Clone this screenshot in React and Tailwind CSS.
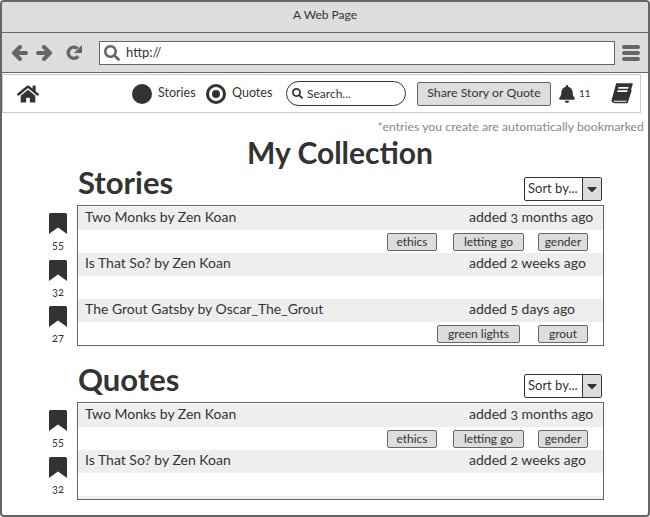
import React from 'react';
import { FaHome, FaBell, FaSearch, FaCaretDown } from 'react-icons/fa';

const stories = [
  { title: 'Two Monks by Zen Koan', added: 'added 3 months ago', tags: ['ethics', 'letting go', 'gender'], count: 55 },
  { title: 'Is That So? by Zen Koan', added: 'added 2 weeks ago', tags: [], count: 32 },
  { title: 'The Grout Gatsby by Oscar_The_Grout', added: 'added 5 days ago', tags: ['green lights', 'grout'], count: 27 },
];

const quotes = stories.slice(0, 2);

const tagWidths = {
  ethics: 'w-[50px] mr-4',
  'letting go': 'w-[71px] mr-[14px]',
  gender: 'w-[50px]',
  'green lights': 'w-[83px] mr-[18px]',
  grout: 'w-[50px]',
};

function BookmarkIcon() {
  return (
    <svg width="18" height="21" viewBox="0 0 18 21" className="block">
      <path d="M0 1.5Q0 0 1.5 0H16.5Q18 0 18 1.5V21L9 14.5L0 21Z" fill="#333" />
    </svg>
  );
}

function BackIcon({ flip }) {
  return (
    <svg width="17" height="16" viewBox="0 0 17 16" className={`block ${flip ? '-scale-x-100' : ''}`}>
      <path d="M9 2L3 8L9 14M3 8H15" fill="none" stroke="#666" strokeWidth="4" strokeLinecap="round" strokeLinejoin="round" />
    </svg>
  );
}

function ReloadIcon() {
  return (
    <svg width="16" height="16" viewBox="0 0 16 16" className="block">
      <path d="M12.2 11.2A5.6 5.6 0 1 1 11.6 3.6" fill="none" stroke="#666" strokeWidth="3.4" />
      <path d="M16 0V8H8Z" fill="#666" />
    </svg>
  );
}

function MenuIcon() {
  return (
    <svg width="18" height="16" viewBox="0 0 18 16" className="block">
      <rect x="0" y="0" width="18" height="4" rx="2" fill="#666" />
      <rect x="0" y="6" width="18" height="4" rx="2" fill="#666" />
      <rect x="0" y="12" width="18" height="4" rx="2" fill="#666" />
    </svg>
  );
}

function BookIcon() {
  return (
    <svg width="23" height="21" viewBox="0 0 23 21" className="block">
      <path d="M6 1H22L17 17H4Q2 17 2.5 18.2Q3 19.5 5 19.5H17L21 7" fill="none" stroke="#333" strokeWidth="1.6" strokeLinejoin="round" />
      <path d="M6 1H22L17 17H4Q1.8 17 1.3 18L6 1Z" fill="#333" />
      <path d="M8.6 4H18.6L18.1 5.8H8.1ZM7.7 7.2H17.7L17.2 9H7.2Z" fill="#fff" />
    </svg>
  );
}

function SortBy() {
  return (
    <div className="flex h-6 w-[78px] border border-[#333] rounded-[2px] text-[13px] text-[#333] bg-white">
      <div className="flex-1 pl-[3px] leading-[20px]">Sort by...</div>
      <div className="w-[19px] bg-[#ddd] border-l border-[#333] flex items-center justify-center">
        <FaCaretDown className="text-[16px] text-[#333]" />
      </div>
    </div>
  );
}

function Section({ title, items, extraRow, titleClass }) {
  return (
    <section>
      <div className={`flex items-end justify-between pl-[76px] pr-[46px] ${titleClass}`}>
        <h2 className="text-[31px] leading-[36px] font-bold text-[#333] mb-px">{title}</h2>
        <SortBy />
      </div>
      <div className="flex mt-[4px]">
        <div className="w-[75px] flex flex-col items-center pl-[37px] shrink-0">
          {items.map((item, i) => (
            <div key={i} className={`w-[38px] flex flex-col items-center ${i === 2 ? 'pt-[7px]' : 'pt-[8px]'}`}>
              <BookmarkIcon />
              <span className="text-[11px] leading-[14px] text-[#333] mt-[4px] oldstyle-nums">{item.count}</span>
            </div>
          ))}
        </div>
        <div className="w-[527px] border border-[#666] pt-px">
          {items.map((item, i) => (
            <div key={i}>
              <div className="h-[23px] bg-[#eee] flex text-[14px] leading-[20px] text-[#333] pl-[7px] oldstyle-nums">
                <span className="flex-1">{item.title}</span>
                <span className="w-[134px]">{item.added}</span>
              </div>
              <div className="h-[23px] flex justify-end items-center pr-[15px]">
                {item.tags.map(tag => (
                  <span key={tag} className={`${tagWidths[tag]} h-[18px] bg-[#ddd] border border-[#666] rounded-[2px] text-[12px] leading-[15px] text-[#333] text-center`}>
                    {tag}
                  </span>
                ))}
              </div>
            </div>
          ))}
          {extraRow && <div className="h-[3px] bg-[#eee]" />}
        </div>
      </div>
    </section>
  );
}

export default function App() {
  return (
    <div className="w-[650px] h-[517px] bg-white border-2 border-[#666] rounded-[4px] overflow-hidden font-['Lato',sans-serif] text-[#333]">
      {/* Browser chrome */}
      <div className="h-[31px] bg-[#ddd] border-b border-[#666] text-center text-[12px] leading-[25px]">A Web Page</div>
      <div className="h-[40px] bg-[#ddd] border-b border-[#666] flex items-center">
        <div className="ml-[9px]"><BackIcon /></div>
        <div className="ml-2"><BackIcon flip /></div>
        <div className="ml-[13px]"><ReloadIcon /></div>
        <div className="ml-[17px] w-[516px] h-[24px] bg-white border border-[#666] flex items-center text-[#333] text-[13px]">
          <FaSearch className="ml-1 text-[16px] text-[#666]" />
          <span className="ml-[6px]">http://</span>
        </div>
        <div className="ml-[7px]"><MenuIcon /></div>
      </div>
      {/* App nav */}
      <div className="pt-px w-[639px]">
        <div className="h-[39px] bg-white border border-[#ccc] flex items-center">
          <FaHome className="ml-[14px] w-[22px] h-[20px] text-[#333]" />
          <div className="ml-[93px] w-5 h-5 rounded-full bg-[#333]" />
          <span className="ml-[6px] text-[12.5px] leading-[16px] mb-[2px] w-[42px]">Stories</span>
          <div className="ml-[6px] w-5 h-5 rounded-full border-[3px] border-[#333] flex items-center justify-center">
            <div className="w-2 h-2 rounded-full bg-[#333]" />
          </div>
          <span className="ml-[6px] text-[12.5px] leading-[16px] mb-[2px] w-[40px]">Quotes</span>
          <div className="ml-[14px] w-[120px] h-[25px] border border-[#333] rounded-full flex items-center text-[12px]">
            <FaSearch className="ml-[5px] text-[11px]" />
            <span className="ml-[4px]">Search...</span>
          </div>
          <div className="ml-[11px] w-[134px] h-[24px] bg-[#ddd] border border-[#666] rounded-[2px] text-center text-[12.3px] leading-[20px]">Share Story or Quote</div>
          <FaBell className="ml-[7px] text-[18px]" />
          <span className="ml-[3px] text-[10px] w-[14px]">11</span>
          <div className="ml-[17px]"><BookIcon /></div>
        </div>
      </div>
      {/* Page */}
      <div className="text-right text-[12.3px] leading-[14px] text-[#888] pr-[4px] mt-[7px]">*entries you create are automatically bookmarked</div>
      <h1 className="text-center text-[30px] leading-[36px] font-bold text-[#333] pl-[30px]">My Collection</h1>
      <Section title="Stories" items={stories} titleClass="-mt-[6px]" />
      <Section title="Quotes" items={quotes} extraRow titleClass="mt-[15px]" />
    </div>
  );
}
